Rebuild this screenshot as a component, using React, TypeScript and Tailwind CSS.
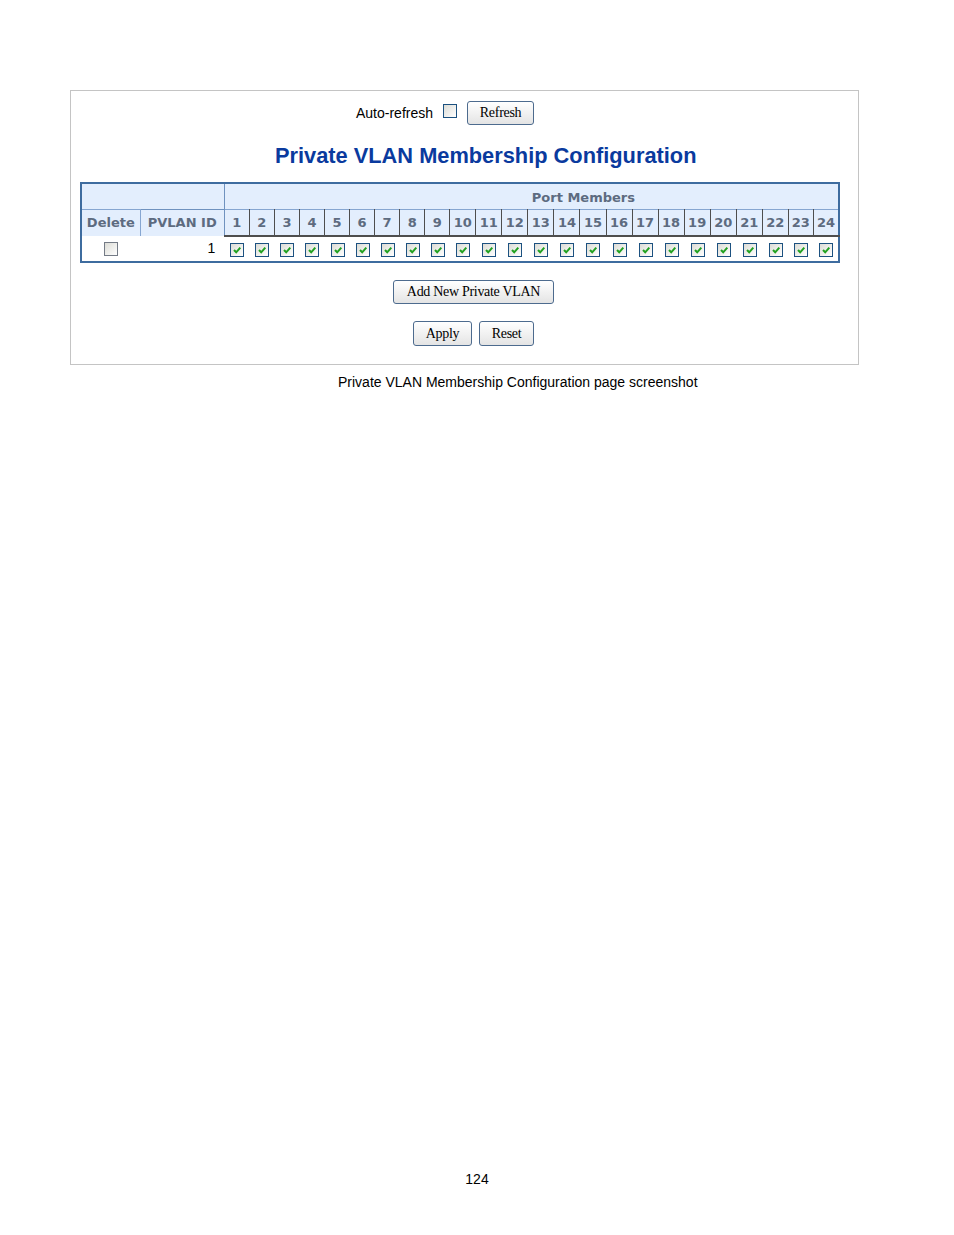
import React from "react";

const ports = Array.from({ length: 24 }, (_, i) => i + 1);
// widths of the port columns, px
const portW = (p: number) => (p >= 10 && p <= 22 ? 26 : 25);

const Check = ({ checked, grey }: { checked?: boolean; grey?: boolean }) => (
  <span
    className={
      "inline-flex h-[14px] w-[14px] items-center justify-center border bg-gradient-to-br from-[#dcdcd6] to-white align-middle " +
      (grey ? "border-[#747b86]" : "border-[#1c5180]")
    }
  >
    {checked && (
      <svg width="10" height="10" viewBox="0 0 10 10">
        <path d="M2 5 L4.2 7.3 L8.3 2.6" fill="none" stroke="#21a121" strokeWidth="2" />
      </svg>
    )}
  </span>
);

const Btn = ({ children, className = "" }: { children: React.ReactNode; className?: string }) => (
  <button
    className={
      "rounded-[3px] border border-[#4d6b8e] bg-gradient-to-b from-white to-[#e4e4e4] text-[14px] leading-none text-black tracking-[-0.3px] " +
      className
    }
    style={{ fontFamily: '"Liberation Serif", serif' }}
  >
    {children}
  </button>
);

export default function App() {
  const hdr = "text-[13px] font-bold text-[#5d6b80]";
  return (
    <div className="min-h-[1235px] w-[954px] bg-white" style={{ fontFamily: '"Liberation Sans", Arial, sans-serif' }}>
      <div className="h-[90px]" />
      <div className="ml-[70px] w-[789px] border border-[#c4c4c4] pt-[10px] pb-[18px]">
        {/* auto refresh */}
        <div className="ml-[285px] flex h-[24px] items-center">
          <span className="text-[14px] text-black">Auto-refresh</span>
          <span className="ml-[10px] mb-[5px]">
            <Check />
          </span>
          <Btn className="ml-[10px] h-[24px] w-[67px]">Refresh</Btn>
        </div>

        <div className="ml-[204px] mt-[19px] h-[24px] text-[21.8px] font-bold leading-[24px] text-[#0a3a9e]">
          Private VLAN Membership Configuration
        </div>

        <table
          className="ml-[9px] mt-[14px] w-[760px] table-fixed border-collapse border-2 border-[#3e6c9f]"
          style={{ fontFamily: '"DejaVu Sans", Verdana, sans-serif' }}
        >
          <colgroup>
            <col style={{ width: 59 }} />
            <col style={{ width: 84 }} />
            {ports.map((p) => (
              <col key={p} style={{ width: portW(p) }} />
            ))}
          </colgroup>
          <tbody>
            <tr className="h-[26px] bg-[#e3eefd]">
              <td colSpan={2} className="border-r border-[#6f92bf]" />
              <td colSpan={24} className={hdr + " pl-[307px] pt-[3px] text-left"}>
                Port Members
              </td>
            </tr>
            <tr className="h-[27px] bg-[#e3eefd]">
              <td className={hdr + " border-t border-r border-[#86a6d1] text-center"}>Delete</td>
              <td className={hdr + " border-t border-r border-[#6f92bf] text-center"}>PVLAN ID</td>
              {ports.map((p) => (
                <td
                  key={p}
                  className={
                    hdr +
                    " border-t border-t-[#86a6d1] border-b-2 border-b-[#4e4e4e] text-center " +
                    (p < 24 ? "border-r border-r-[#4e4e4e]" : "")
                  }
                >
                  {p}
                </td>
              ))}
            </tr>
            <tr className="h-[24px] bg-white">
              <td className="text-center">
                <Check grey />
              </td>
              <td className="pr-[9px] text-right text-[14px] text-black" style={{ fontFamily: '"Liberation Sans", Arial, sans-serif' }}>
                1
              </td>
              {ports.map((p) => (
                <td key={p} className="pl-[1px] text-center">
                  <Check checked />
                </td>
              ))}
            </tr>
          </tbody>
        </table>

        <div className="ml-[322px] mt-[16px]">
          <Btn className="h-[24px] w-[161px]">Add New Private VLAN</Btn>
        </div>
        <div className="ml-[342px] mt-[17px] flex gap-[7px]">
          <Btn className="h-[25px] w-[59px]">Apply</Btn>
          <Btn className="h-[25px] w-[55px]">Reset</Btn>
        </div>
      </div>

      <div className="ml-[338px] mt-[9px] text-[14px] leading-[16px] text-black">
        Private VLAN Membership Configuration page screenshot
      </div>

      <div className="mt-[781px] text-center text-[14px] leading-[16px] text-black">124</div>
    </div>
  );
}
